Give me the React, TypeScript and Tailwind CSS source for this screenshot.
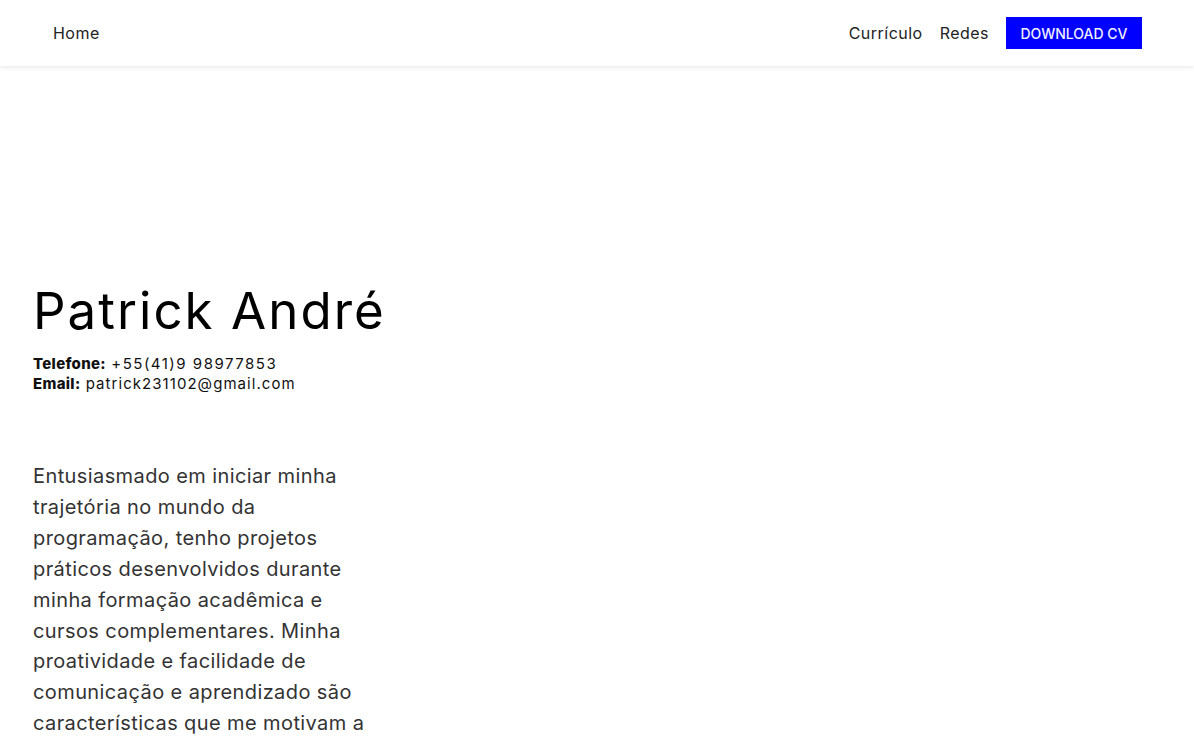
import React from 'react';

const links = ['Currículo', 'Redes'];

const App: React.FC = () => {
  return (
    <div className="min-h-screen bg-white text-[#111] font-['Inter',sans-serif]">
      {/* barra de navegação */}
      <header className="h-[66px] flex items-center justify-between px-[53px] bg-white shadow-[0_2px_4px_rgba(0,0,0,0.08)]">
        <a href="#home" className="text-[16px] tracking-[0.03em] text-[#222]">Home</a>
        <nav className="flex items-center">
          {links.map((l) => (
            <a key={l} href="#" className="text-[16px] tracking-[0.03em] text-[#222] mr-[17px]">{l}</a>
          ))}
          <a href="#cv" className="h-[32px] w-[136px] flex items-center justify-center bg-[#0000ff] text-[#f0f0ff] text-[14px] font-medium mr-[-1px]">
            DOWNLOAD CV
          </a>
        </nav>
      </header>

      {/* apresentação */}
      <main className="px-[33px] pt-[215px]">
        <h1 className="text-[51px] leading-[60px] tracking-[0.04em] text-black">Patrick André</h1>
        <div className="mt-[13px] text-[15px] leading-[20px] tracking-[0.07em] text-[#111]">
          <p>
            <strong className="font-extrabold tracking-[0.02em]">Telefone:</strong>{' '}
            <span className="tracking-[0.1em]">+55(41)9 98977853</span>
          </p>
          <p><strong className="font-extrabold tracking-[0.02em]">Email:</strong> patrick231102@gmail.com</p>
        </div>
        <p className="mt-[67px] w-[340px] text-[20px] leading-[30.9px] tracking-[0.02em] text-[#333]">
          Entusiasmado em iniciar minha trajetória no mundo da programação, tenho projetos práticos desenvolvidos durante minha formação acadêmica e cursos complementares. Minha proatividade e facilidade de comunicação e aprendizado são características que me motivam a buscar novos desafios.
        </p>
      </main>
    </div>
  );
};

export default App;
